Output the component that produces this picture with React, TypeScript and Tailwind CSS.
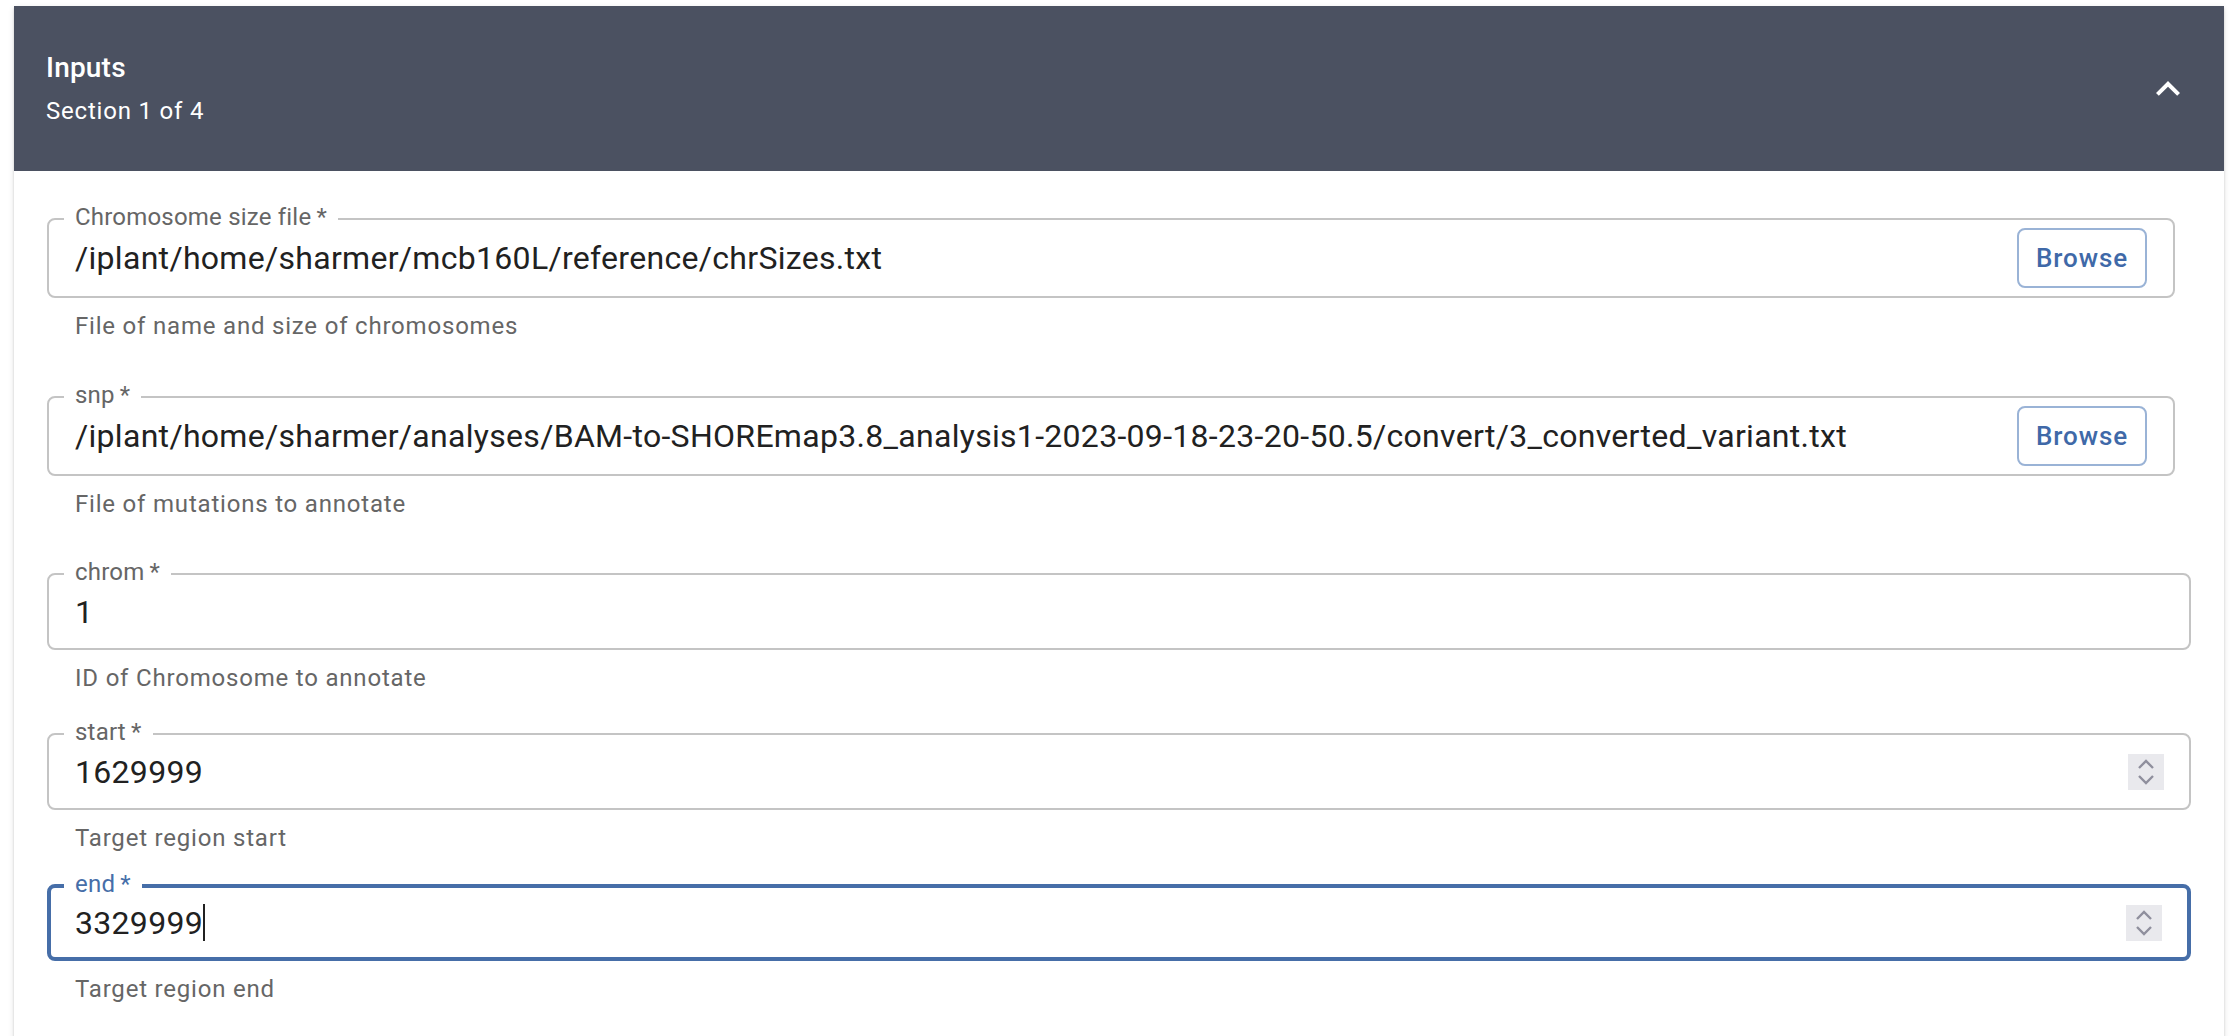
import React from 'react'

type Field = {
  id: string
  label: string
  value: string
  helper: string
  kind: 'file' | 'text' | 'number'
  gap: string
  focused?: boolean
}

const fields: Field[] = [
  {
    id: 'chrSizes',
    label: 'Chromosome size file',
    value: '/iplant/home/sharmer/mcb160L/reference/chrSizes.txt',
    helper: 'File of name and size of chromosomes',
    kind: 'file',
    gap: '',
  },
  {
    id: 'snp',
    label: 'snp',
    value:
      '/iplant/home/sharmer/analyses/BAM-to-SHOREmap3.8_analysis1-2023-09-18-23-20-50.5/convert/3_converted_variant.txt',
    helper: 'File of mutations to annotate',
    kind: 'file',
    gap: 'mt-[50px]',
  },
  {
    id: 'chrom',
    label: 'chrom',
    value: '1',
    helper: 'ID of Chromosome to annotate',
    kind: 'text',
    gap: 'mt-[49px]',
  },
  {
    id: 'start',
    label: 'start',
    value: '1629999',
    helper: 'Target region start',
    kind: 'number',
    gap: 'mt-[35px]',
  },
  {
    id: 'end',
    label: 'end',
    value: '3329999',
    helper: 'Target region end',
    kind: 'number',
    gap: 'mt-[26px]',
    focused: true,
  },
]

function ExpandLess() {
  return (
    <svg viewBox="0 0 24 24" className="w-[48px] h-[48px] fill-white">
      <path d="M12 8l-6 6 1.41 1.41L12 10.83l4.59 4.58L18 14z" />
    </svg>
  )
}

// Firefox-style number spinner
function Spinner() {
  return (
    <div className="w-[36px] h-[36px] bg-[#e9e9ed] shrink-0">
      <svg viewBox="0 0 36 36" className="w-[36px] h-[36px]" fill="none" stroke="#8f8f9d" strokeWidth="2.4">
        <polyline points="11,14 18,7 25,14" />
        <polyline points="11,22 18,29 25,22" />
      </svg>
    </div>
  )
}

function FormField({ field }: { field: Field }) {
  const isFile = field.kind === 'file'
  const focused = !!field.focused

  return (
    <div className={`${field.gap} ${isFile ? 'mr-[16px]' : ''}`}>
      <div
        className={`relative flex items-center rounded-[8px] ${
          isFile ? 'h-[80px] pr-[26px]' : 'h-[77px] pr-[25px]'
        } ${
          focused
            ? 'border-[4px] border-[#466ea8] pl-[24px]'
            : 'border-2 border-[#c4c4c4] pl-[26px]'
        }`}
      >
        <label
          className={`absolute px-[11px] bg-white text-[24px] leading-[28px] tracking-[0.2px] whitespace-nowrap ${
            focused ? 'left-[13px] top-[-18px] text-[#466ea8]' : 'left-[15px] top-[-17px] text-[#666666]'
          }`}
        >
          {field.label}
          {'\u2009'}*
        </label>

        <div className="flex-1 flex items-center min-w-0 text-[32px] leading-[46px] tracking-[0.3px] text-[#212121] whitespace-nowrap overflow-hidden">
          <span>{field.value}</span>
          {focused && <span className="inline-block w-[2px] h-[37px] bg-[#212121]" />}
        </div>

        {isFile && (
          <button className="w-[130px] h-[60px] shrink-0 flex items-center justify-center rounded-[8px] border-2 border-[#9ab3d6] text-[26px] font-medium tracking-[0.9px] text-[#3f69a8]">
            Browse
          </button>
        )}
        {field.kind === 'number' && <Spinner />}
      </div>

      <p className="mt-[8px] pl-[28px] text-[24px] leading-[40px] tracking-[0.8px] text-[#666666]">
        {field.helper}
      </p>
    </div>
  )
}

export default function App() {
  return (
    <div className="min-h-screen bg-white pt-[6px] px-[14px] font-['Roboto','Liberation_Sans',sans-serif]">
      <div className="bg-white shadow-[0_4px_2px_-2px_rgba(0,0,0,0.2),0_2px_2px_0_rgba(0,0,0,0.14),0_2px_6px_0_rgba(0,0,0,0.12)]">
        {/* Header */}
        <div className="h-[165px] bg-[#4b5161] flex items-center justify-between pl-[32px] pr-[32px]">
          <div className="text-white">
            <div className="text-[28px] leading-[34px] font-medium tracking-[0.2px]">Inputs</div>
            <div className="mt-[11px] text-[24px] leading-[30px] tracking-[0.8px]">Section 1 of 4</div>
          </div>
          <ExpandLess />
        </div>

        {/* Fields */}
        <div className="px-[33px] pt-[47px] pb-[40px]">
          {fields.map((f) => (
            <FormField key={f.id} field={f} />
          ))}
        </div>
      </div>
    </div>
  )
}
